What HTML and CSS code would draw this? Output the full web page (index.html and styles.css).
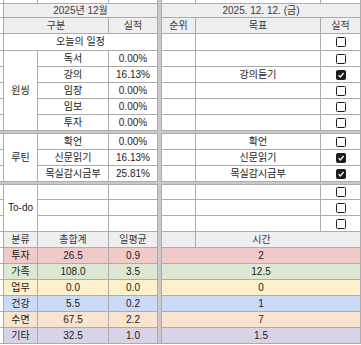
FILE: index.html
```html
<!DOCTYPE html>
<html lang="ko">
<head>
<meta charset="utf-8">
<link rel="stylesheet" href="styles.css">
</head>
<body>
<div class="sheet">
  <div class="vsep"></div>
  <div class="hsep hsep1"></div>
  <div class="hsep hsep2"></div>

  <!-- r0 partial row -->
  <div class="c"></div><div class="c"></div><div class="c"></div><div class="c"></div>
  <div class="c"></div><div class="c"></div><div class="c"></div>

  <!-- r1 -->
  <div class="c"></div>
  <div class="c hd s3">2025년 12월</div>
  <div class="c hd s3">2025. 12. 12. (금)</div>

  <!-- r2 -->
  <div class="c"></div>
  <div class="c hd s2">구분</div>
  <div class="c hd">실적</div>
  <div class="c hd">순위</div>
  <div class="c hd">목표</div>
  <div class="c hd">실적</div>

  <!-- r3 -->
  <div class="c"></div>
  <div class="c s3">오늘의 일정</div>
  <div class="c"></div><div class="c"></div>
  <div class="c"><span class="box"></span></div>

  <!-- r4-r8 원씽 -->
  <div class="c"></div>
  <div class="c r5">원씽</div>
  <div class="c">독서</div><div class="c">0.00%</div>
  <div class="c"></div><div class="c"></div><div class="c"><span class="box"></span></div>

  <div class="c"></div>
  <div class="c">강의</div><div class="c">16.13%</div>
  <div class="c"></div><div class="c">강의듣기</div><div class="c"><span class="box on"><svg viewBox="0 0 8 8"><path d="M1.5 4.2 L3.3 6 L6.6 2" /></svg></span></div>

  <div class="c"></div>
  <div class="c">임장</div><div class="c">0.00%</div>
  <div class="c"></div><div class="c"></div><div class="c"><span class="box"></span></div>

  <div class="c"></div>
  <div class="c">임보</div><div class="c">0.00%</div>
  <div class="c"></div><div class="c"></div><div class="c"><span class="box"></span></div>

  <div class="c"></div>
  <div class="c">투자</div><div class="c">0.00%</div>
  <div class="c"></div><div class="c"></div><div class="c"><span class="box"></span></div>

  <!-- r10-r12 루틴 -->
  <div class="c"></div>
  <div class="c r3">루틴</div>
  <div class="c">확언</div><div class="c">0.00%</div>
  <div class="c"></div><div class="c">확언</div><div class="c"><span class="box"></span></div>

  <div class="c"></div>
  <div class="c">신문읽기</div><div class="c">16.13%</div>
  <div class="c"></div><div class="c">신문읽기</div><div class="c"><span class="box on"><svg viewBox="0 0 8 8"><path d="M1.5 4.2 L3.3 6 L6.6 2" /></svg></span></div>

  <div class="c"></div>
  <div class="c">목실감시금부</div><div class="c">25.81%</div>
  <div class="c"></div><div class="c">목실감시금부</div><div class="c"><span class="box on"><svg viewBox="0 0 8 8"><path d="M1.5 4.2 L3.3 6 L6.6 2" /></svg></span></div>

  <!-- r14-r16 To-do -->
  <div class="c"></div>
  <div class="c r3">To-do</div>
  <div class="c"></div><div class="c"></div>
  <div class="c"></div><div class="c"></div><div class="c"><span class="box"></span></div>

  <div class="c"></div>
  <div class="c"></div><div class="c"></div>
  <div class="c"></div><div class="c"></div><div class="c"><span class="box"></span></div>

  <div class="c"></div>
  <div class="c"></div><div class="c"></div>
  <div class="c"></div><div class="c"></div><div class="c"><span class="box"></span></div>

  <!-- r17 -->
  <div class="c"></div>
  <div class="c hd">분류</div>
  <div class="c hd">총합계</div>
  <div class="c hd">일평균</div>
  <div class="c hd"></div>
  <div class="c hd s2 time">시간</div>

  <!-- r18-r23 -->
  <div class="c"></div>
  <div class="c red">투자</div><div class="c red">26.5</div><div class="c red">0.9</div><div class="c red s3">2</div>

  <div class="c"></div>
  <div class="c green">가족</div><div class="c green">108.0</div><div class="c green">3.5</div><div class="c green s3">12.5</div>

  <div class="c"></div>
  <div class="c yellow">업무</div><div class="c yellow">0.0</div><div class="c yellow">0.0</div><div class="c yellow s3">0</div>

  <div class="c"></div>
  <div class="c blue">건강</div><div class="c blue">5.5</div><div class="c blue">0.2</div><div class="c blue s3">1</div>

  <div class="c"></div>
  <div class="c orange">수면</div><div class="c orange">67.5</div><div class="c orange">2.2</div><div class="c orange s3">7</div>

  <div class="c"></div>
  <div class="c purple">기타</div><div class="c purple">32.5</div><div class="c purple">1.0</div><div class="c purple s3">1.5</div>
</div>
</body>
</html>
```
FILE: styles.css
```css
html, body {
  margin: 0;
  padding: 0;
  background: #ffffff;
}

.sheet {
  display: grid;
  width: 360px;
  grid-template-columns: 3px 33px 70px 48px 3px 33px 124px 39px;
  grid-template-rows: 3px 13px 15px 16px 15px 15px 15px 15px 15px 2px 15px 15px 15px 2px 14px 15px 15px 15px 15px 15px 15px 15px 15px 15px;
  gap: 1px;
  background: #acacac;
  border-right: 1px solid #acacac;
  border-bottom: 1px solid #acacac;
  font-family: "Liberation Sans", "Noto Sans CJK KR", sans-serif;
  font-size: 10px;
  color: #1c1c1c;
}

.c {
  background: #ffffff;
  display: flex;
  align-items: center;
  justify-content: center;
  line-height: 1;
  white-space: nowrap;
  overflow: hidden;
}

.vsep {
  grid-column: 5;
  grid-row: 1 / -1;
  background: #c9c9c9;
}

.hsep {
  grid-column: 1 / -1;
  background: #c9c9c9;
}
.hsep1 { grid-row: 10; }
.hsep2 { grid-row: 14; }

.s2 { grid-column: span 2; }
.s3 { grid-column: span 3; }
.r3 { grid-row: span 3; }
.r5 { grid-row: span 5; }

.hd {
  background: #efefef;
  color: #3a3a3a;
}

.time {
  padding-right: 33px;
}

.red { background: #f0caca; }
.green { background: #dce8d4; }
.yellow { background: #fdf1cc; }
.blue { background: #cbdaf6; }
.orange { background: #f9e4cf; }
.purple { background: #d9d3e8; }

.box {
  display: block;
  width: 8px;
  height: 8px;
  border: 1.5px solid #1e1e1e;
  border-radius: 1.5px;
  background: #ffffff;
}

.box.on {
  background: #1a1a1a;
}

.box svg {
  display: block;
  width: 8px;
  height: 8px;
}

.box svg path {
  fill: none;
  stroke: #ffffff;
  stroke-width: 1.2;
}
```
